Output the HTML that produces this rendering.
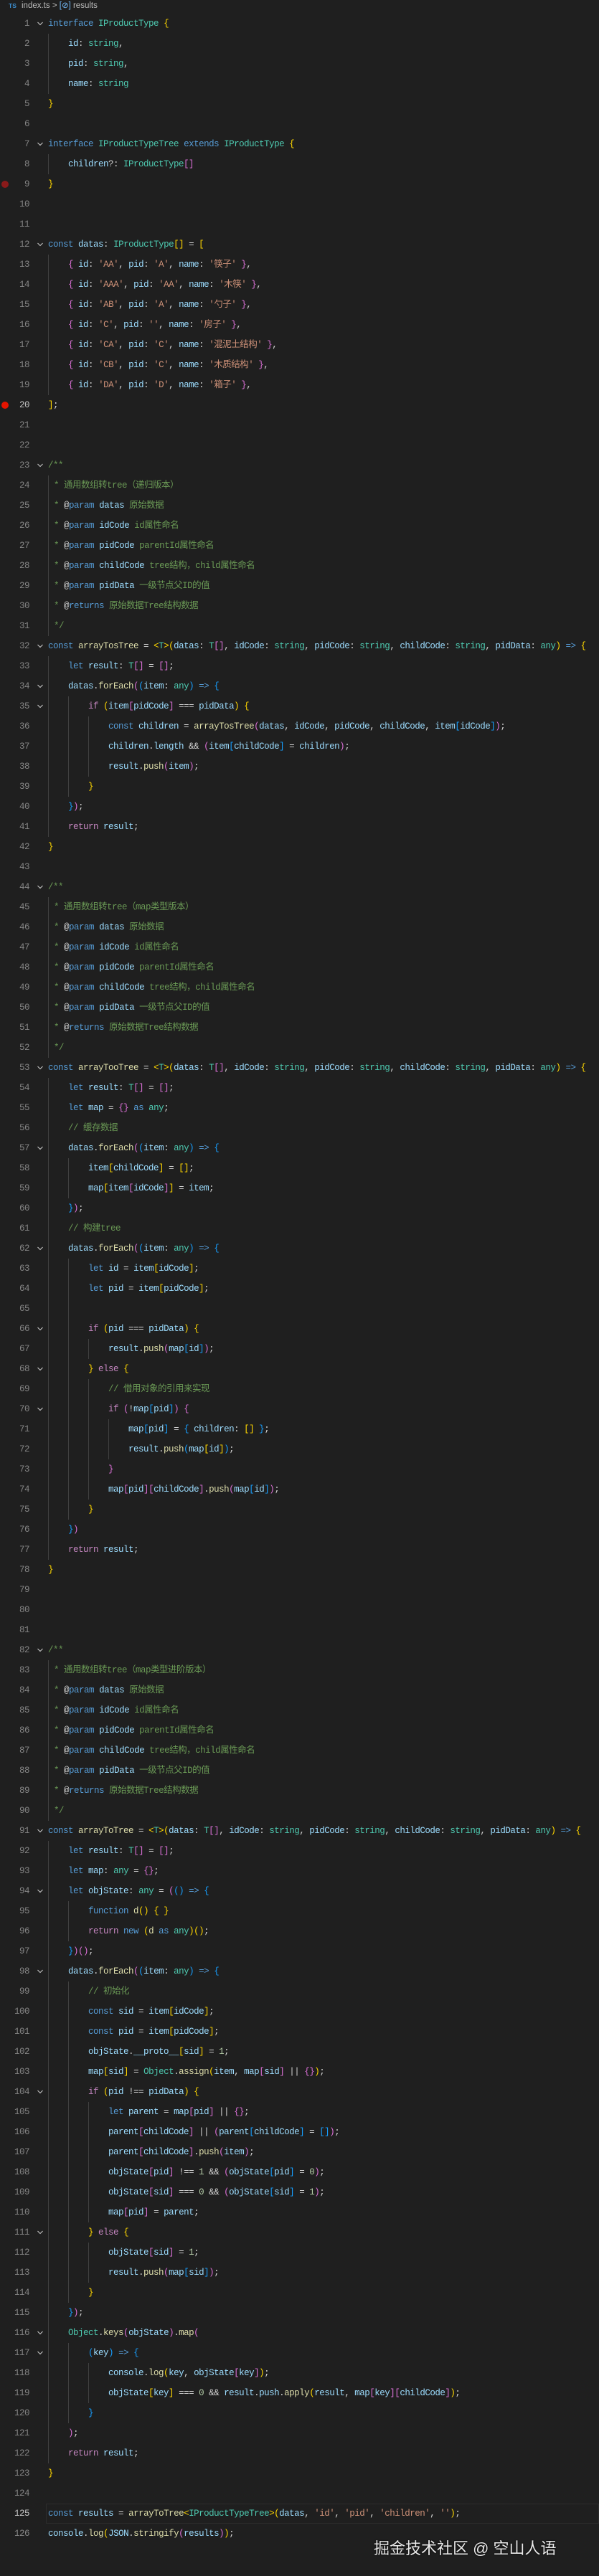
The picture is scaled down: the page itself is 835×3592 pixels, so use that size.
<!DOCTYPE html>
<html><head><meta charset="utf-8"><style>
html,body{margin:0;padding:0;background:#1f1f1f;}
body{width:835px;height:3592px;position:relative;overflow:hidden;font-family:"Liberation Mono","Noto Sans CJK SC",monospace;font-size:12.5px;letter-spacing:-0.5px;color:#d4d4d4;}
.hd{position:absolute;left:0;top:0;height:19px;width:835px;font-family:"Liberation Sans",sans-serif;letter-spacing:0;font-size:11.5px;color:#bbb;line-height:17px;}
.hd .ts{position:absolute;left:12px;top:0;color:#3c8fd0;font-weight:bold;font-size:8.5px;}
.hd .t{position:absolute;left:30px;top:0;}
.ed{position:absolute;left:0;top:19px;width:835px;}
.l{height:28px;position:relative;line-height:28px;}
.l .n{position:absolute;left:0;width:41px;text-align:right;color:#858585;font-size:12.5px;}
.l .c{position:absolute;left:67px;top:0;white-space:pre;}
.l .f{position:absolute;left:52px;top:11px;width:8px;height:6px;}
.g{display:inline-block;height:28px;vertical-align:top;background:repeating-linear-gradient(90deg,#404040 0 1px,transparent 1px 28px);}
.g1{width:28px}.g2{width:56px}.g3{width:84px}.g4{width:112px}
.gc{display:inline-block;height:28px;vertical-align:top;width:8px;border-left:1px solid #404040;box-sizing:border-box;}
kw{color:#569cd6}ct{color:#c586c0}ty{color:#4ec9b0}vr{color:#9cdcfe}fn{color:#dcdcaa}st{color:#ce9178}cm{color:#6a9955}nm{color:#b5cea8}
y1{color:#ffd700}m2{color:#da70d6}b3{color:#179fff}dk{color:#569cd6}ak{color:#d4d4d4}
.bp{position:absolute;left:2px;top:9px;width:10px;height:10px;border-radius:50%;background:#e51400;}
.hl{position:absolute;left:64px;right:0;top:0;height:26px;border:1px solid #2c2c2c;}
.wm{position:absolute;left:521px;top:3536px;font-family:"Liberation Sans","Noto Sans CJK SC",sans-serif;font-size:22px;letter-spacing:0;color:#e8e8e8;text-shadow:0 0 2px #000;}
</style></head><body>
<div class="hd"><span class="ts">TS</span><span class="t">index.ts &gt; <span style="color:#75beff">[⊘]</span> results</span></div>
<svg width="0" height="0" style="position:absolute"><defs><symbol id="ch" viewBox="0 0 8 6"><path d="M0.5 1 L4 4.5 L7.5 1" fill="none" stroke="#c5c5c5" stroke-width="1.1"/></symbol></defs></svg>
<div class="ed">
<div class="l"><span class="n">1</span><svg class="f"><use href="#ch"/></svg><span class="c"><kw>interface</kw> <ty>IProductType</ty> <y1>{</y1></span></div>
<div class="l"><span class="n">2</span><span class="c"><span class="g g1"></span><vr>id</vr>: <ty>string</ty>,</span></div>
<div class="l"><span class="n">3</span><span class="c"><span class="g g1"></span><vr>pid</vr>: <ty>string</ty>,</span></div>
<div class="l"><span class="n">4</span><span class="c"><span class="g g1"></span><vr>name</vr>: <ty>string</ty></span></div>
<div class="l"><span class="n">5</span><span class="c"><y1>}</y1></span></div>
<div class="l"><span class="n">6</span></div>
<div class="l"><span class="n">7</span><svg class="f"><use href="#ch"/></svg><span class="c"><kw>interface</kw> <ty>IProductTypeTree</ty> <kw>extends</kw> <ty>IProductType</ty> <y1>{</y1></span></div>
<div class="l"><span class="n">8</span><span class="c"><span class="g g1"></span><vr>children</vr>?: <ty>IProductType</ty><m2>[]</m2></span></div>
<div class="l"><span class="bp" style="background:#8a1a1a"></span><span class="n">9</span><span class="c"><y1>}</y1></span></div>
<div class="l"><span class="n">10</span></div>
<div class="l"><span class="n">11</span></div>
<div class="l"><span class="n">12</span><svg class="f"><use href="#ch"/></svg><span class="c"><kw>const</kw> <vr>datas</vr>: <ty>IProductType</ty><y1>[]</y1> = <y1>[</y1></span></div>
<div class="l"><span class="n">13</span><span class="c"><span class="g g1"></span><m2>{</m2> <vr>id</vr>: <st>'AA'</st>, <vr>pid</vr>: <st>'A'</st>, <vr>name</vr>: <st>'筷子'</st> <m2>}</m2>,</span></div>
<div class="l"><span class="n">14</span><span class="c"><span class="g g1"></span><m2>{</m2> <vr>id</vr>: <st>'AAA'</st>, <vr>pid</vr>: <st>'AA'</st>, <vr>name</vr>: <st>'木筷'</st> <m2>}</m2>,</span></div>
<div class="l"><span class="n">15</span><span class="c"><span class="g g1"></span><m2>{</m2> <vr>id</vr>: <st>'AB'</st>, <vr>pid</vr>: <st>'A'</st>, <vr>name</vr>: <st>'勺子'</st> <m2>}</m2>,</span></div>
<div class="l"><span class="n">16</span><span class="c"><span class="g g1"></span><m2>{</m2> <vr>id</vr>: <st>'C'</st>, <vr>pid</vr>: <st>''</st>, <vr>name</vr>: <st>'房子'</st> <m2>}</m2>,</span></div>
<div class="l"><span class="n">17</span><span class="c"><span class="g g1"></span><m2>{</m2> <vr>id</vr>: <st>'CA'</st>, <vr>pid</vr>: <st>'C'</st>, <vr>name</vr>: <st>'混泥土结构'</st> <m2>}</m2>,</span></div>
<div class="l"><span class="n">18</span><span class="c"><span class="g g1"></span><m2>{</m2> <vr>id</vr>: <st>'CB'</st>, <vr>pid</vr>: <st>'C'</st>, <vr>name</vr>: <st>'木质结构'</st> <m2>}</m2>,</span></div>
<div class="l"><span class="n">19</span><span class="c"><span class="g g1"></span><m2>{</m2> <vr>id</vr>: <st>'DA'</st>, <vr>pid</vr>: <st>'D'</st>, <vr>name</vr>: <st>'箱子'</st> <m2>}</m2>,</span></div>
<div class="l"><span class="bp"></span><span class="n" style="color:#c6c6c6">20</span><span class="c"><y1>]</y1>;</span></div>
<div class="l"><span class="n">21</span></div>
<div class="l"><span class="n">22</span></div>
<div class="l"><span class="n">23</span><svg class="f"><use href="#ch"/></svg><span class="c"><cm>/**</cm></span></div>
<div class="l"><span class="n">24</span><span class="c"><span class="gc"></span><cm>* 通用数组转tree（递归版本）</cm></span></div>
<div class="l"><span class="n">25</span><span class="c"><span class="gc"></span><cm>* </cm><ak>@</ak><dk>param</dk> <vr>datas</vr> <cm>原始数据</cm></span></div>
<div class="l"><span class="n">26</span><span class="c"><span class="gc"></span><cm>* </cm><ak>@</ak><dk>param</dk> <vr>idCode</vr> <cm>id属性命名</cm></span></div>
<div class="l"><span class="n">27</span><span class="c"><span class="gc"></span><cm>* </cm><ak>@</ak><dk>param</dk> <vr>pidCode</vr> <cm>parentId属性命名</cm></span></div>
<div class="l"><span class="n">28</span><span class="c"><span class="gc"></span><cm>* </cm><ak>@</ak><dk>param</dk> <vr>childCode</vr> <cm>tree结构，child属性命名</cm></span></div>
<div class="l"><span class="n">29</span><span class="c"><span class="gc"></span><cm>* </cm><ak>@</ak><dk>param</dk> <vr>pidData</vr> <cm>一级节点父ID的值</cm></span></div>
<div class="l"><span class="n">30</span><span class="c"><span class="gc"></span><cm>* </cm><ak>@</ak><dk>returns</dk> <cm>原始数据Tree结构数据</cm></span></div>
<div class="l"><span class="n">31</span><span class="c"><span class="gc"></span><cm>*/</cm></span></div>
<div class="l"><span class="n">32</span><svg class="f"><use href="#ch"/></svg><span class="c"><kw>const</kw> <fn>arrayTosTree</fn> = <y1>&lt;</y1><ty>T</ty><y1>&gt;</y1><y1>(</y1><vr>datas</vr>: <ty>T</ty><m2>[]</m2>, <vr>idCode</vr>: <ty>string</ty>, <vr>pidCode</vr>: <ty>string</ty>, <vr>childCode</vr>: <ty>string</ty>, <vr>pidData</vr>: <ty>any</ty><y1>)</y1> <kw>=&gt;</kw> <y1>{</y1></span></div>
<div class="l"><span class="n">33</span><span class="c"><span class="g g1"></span><kw>let</kw> <vr>result</vr>: <ty>T</ty><m2>[]</m2> = <m2>[]</m2>;</span></div>
<div class="l"><span class="n">34</span><svg class="f"><use href="#ch"/></svg><span class="c"><span class="g g1"></span><vr>datas</vr>.<fn>forEach</fn><m2>(</m2><b3>(</b3><vr>item</vr>: <ty>any</ty><b3>)</b3> <kw>=&gt;</kw> <b3>{</b3></span></div>
<div class="l"><span class="n">35</span><svg class="f"><use href="#ch"/></svg><span class="c"><span class="g g2"></span><ct>if</ct> <y1>(</y1><vr>item</vr><m2>[</m2><vr>pidCode</vr><m2>]</m2> === <vr>pidData</vr><y1>)</y1> <y1>{</y1></span></div>
<div class="l"><span class="n">36</span><span class="c"><span class="g g3"></span><kw>const</kw> <vr>children</vr> = <fn>arrayTosTree</fn><m2>(</m2><vr>datas</vr>, <vr>idCode</vr>, <vr>pidCode</vr>, <vr>childCode</vr>, <vr>item</vr><b3>[</b3><vr>idCode</vr><b3>]</b3><m2>)</m2>;</span></div>
<div class="l"><span class="n">37</span><span class="c"><span class="g g3"></span><vr>children</vr>.<vr>length</vr> &amp;&amp; <m2>(</m2><vr>item</vr><b3>[</b3><vr>childCode</vr><b3>]</b3> = <vr>children</vr><m2>)</m2>;</span></div>
<div class="l"><span class="n">38</span><span class="c"><span class="g g3"></span><vr>result</vr>.<fn>push</fn><m2>(</m2><vr>item</vr><m2>)</m2>;</span></div>
<div class="l"><span class="n">39</span><span class="c"><span class="g g2"></span><y1>}</y1></span></div>
<div class="l"><span class="n">40</span><span class="c"><span class="g g1"></span><b3>}</b3><m2>)</m2>;</span></div>
<div class="l"><span class="n">41</span><span class="c"><span class="g g1"></span><ct>return</ct> <vr>result</vr>;</span></div>
<div class="l"><span class="n">42</span><span class="c"><y1>}</y1></span></div>
<div class="l"><span class="n">43</span></div>
<div class="l"><span class="n">44</span><svg class="f"><use href="#ch"/></svg><span class="c"><cm>/**</cm></span></div>
<div class="l"><span class="n">45</span><span class="c"><span class="gc"></span><cm>* 通用数组转tree（map类型版本）</cm></span></div>
<div class="l"><span class="n">46</span><span class="c"><span class="gc"></span><cm>* </cm><ak>@</ak><dk>param</dk> <vr>datas</vr> <cm>原始数据</cm></span></div>
<div class="l"><span class="n">47</span><span class="c"><span class="gc"></span><cm>* </cm><ak>@</ak><dk>param</dk> <vr>idCode</vr> <cm>id属性命名</cm></span></div>
<div class="l"><span class="n">48</span><span class="c"><span class="gc"></span><cm>* </cm><ak>@</ak><dk>param</dk> <vr>pidCode</vr> <cm>parentId属性命名</cm></span></div>
<div class="l"><span class="n">49</span><span class="c"><span class="gc"></span><cm>* </cm><ak>@</ak><dk>param</dk> <vr>childCode</vr> <cm>tree结构，child属性命名</cm></span></div>
<div class="l"><span class="n">50</span><span class="c"><span class="gc"></span><cm>* </cm><ak>@</ak><dk>param</dk> <vr>pidData</vr> <cm>一级节点父ID的值</cm></span></div>
<div class="l"><span class="n">51</span><span class="c"><span class="gc"></span><cm>* </cm><ak>@</ak><dk>returns</dk> <cm>原始数据Tree结构数据</cm></span></div>
<div class="l"><span class="n">52</span><span class="c"><span class="gc"></span><cm>*/</cm></span></div>
<div class="l"><span class="n">53</span><svg class="f"><use href="#ch"/></svg><span class="c"><kw>const</kw> <fn>arrayTooTree</fn> = <y1>&lt;</y1><ty>T</ty><y1>&gt;</y1><y1>(</y1><vr>datas</vr>: <ty>T</ty><m2>[]</m2>, <vr>idCode</vr>: <ty>string</ty>, <vr>pidCode</vr>: <ty>string</ty>, <vr>childCode</vr>: <ty>string</ty>, <vr>pidData</vr>: <ty>any</ty><y1>)</y1> <kw>=&gt;</kw> <y1>{</y1></span></div>
<div class="l"><span class="n">54</span><span class="c"><span class="g g1"></span><kw>let</kw> <vr>result</vr>: <ty>T</ty><m2>[]</m2> = <m2>[]</m2>;</span></div>
<div class="l"><span class="n">55</span><span class="c"><span class="g g1"></span><kw>let</kw> <vr>map</vr> = <m2>{}</m2> <kw>as</kw> <ty>any</ty>;</span></div>
<div class="l"><span class="n">56</span><span class="c"><span class="g g1"></span><cm>// 缓存数据</cm></span></div>
<div class="l"><span class="n">57</span><svg class="f"><use href="#ch"/></svg><span class="c"><span class="g g1"></span><vr>datas</vr>.<fn>forEach</fn><m2>(</m2><b3>(</b3><vr>item</vr>: <ty>any</ty><b3>)</b3> <kw>=&gt;</kw> <b3>{</b3></span></div>
<div class="l"><span class="n">58</span><span class="c"><span class="g g2"></span><vr>item</vr><y1>[</y1><vr>childCode</vr><y1>]</y1> = <y1>[]</y1>;</span></div>
<div class="l"><span class="n">59</span><span class="c"><span class="g g2"></span><vr>map</vr><y1>[</y1><vr>item</vr><m2>[</m2><vr>idCode</vr><m2>]</m2><y1>]</y1> = <vr>item</vr>;</span></div>
<div class="l"><span class="n">60</span><span class="c"><span class="g g1"></span><b3>}</b3><m2>)</m2>;</span></div>
<div class="l"><span class="n">61</span><span class="c"><span class="g g1"></span><cm>// 构建tree</cm></span></div>
<div class="l"><span class="n">62</span><svg class="f"><use href="#ch"/></svg><span class="c"><span class="g g1"></span><vr>datas</vr>.<fn>forEach</fn><m2>(</m2><b3>(</b3><vr>item</vr>: <ty>any</ty><b3>)</b3> <kw>=&gt;</kw> <b3>{</b3></span></div>
<div class="l"><span class="n">63</span><span class="c"><span class="g g2"></span><kw>let</kw> <vr>id</vr> = <vr>item</vr><y1>[</y1><vr>idCode</vr><y1>]</y1>;</span></div>
<div class="l"><span class="n">64</span><span class="c"><span class="g g2"></span><kw>let</kw> <vr>pid</vr> = <vr>item</vr><y1>[</y1><vr>pidCode</vr><y1>]</y1>;</span></div>
<div class="l"><span class="n">65</span><span class="c"><span class="g g2"></span></span></div>
<div class="l"><span class="n">66</span><svg class="f"><use href="#ch"/></svg><span class="c"><span class="g g2"></span><ct>if</ct> <y1>(</y1><vr>pid</vr> === <vr>pidData</vr><y1>)</y1> <y1>{</y1></span></div>
<div class="l"><span class="n">67</span><span class="c"><span class="g g3"></span><vr>result</vr>.<fn>push</fn><m2>(</m2><vr>map</vr><b3>[</b3><vr>id</vr><b3>]</b3><m2>)</m2>;</span></div>
<div class="l"><span class="n">68</span><svg class="f"><use href="#ch"/></svg><span class="c"><span class="g g2"></span><y1>}</y1> <ct>else</ct> <y1>{</y1></span></div>
<div class="l"><span class="n">69</span><span class="c"><span class="g g3"></span><cm>// 借用对象的引用来实现</cm></span></div>
<div class="l"><span class="n">70</span><svg class="f"><use href="#ch"/></svg><span class="c"><span class="g g3"></span><ct>if</ct> <m2>(</m2>!<vr>map</vr><b3>[</b3><vr>pid</vr><b3>]</b3><m2>)</m2> <m2>{</m2></span></div>
<div class="l"><span class="n">71</span><span class="c"><span class="g g4"></span><vr>map</vr><b3>[</b3><vr>pid</vr><b3>]</b3> = <b3>{</b3> <vr>children</vr>: <y1>[]</y1> <b3>}</b3>;</span></div>
<div class="l"><span class="n">72</span><span class="c"><span class="g g4"></span><vr>result</vr>.<fn>push</fn><b3>(</b3><vr>map</vr><y1>[</y1><vr>id</vr><y1>]</y1><b3>)</b3>;</span></div>
<div class="l"><span class="n">73</span><span class="c"><span class="g g3"></span><m2>}</m2></span></div>
<div class="l"><span class="n">74</span><span class="c"><span class="g g3"></span><vr>map</vr><m2>[</m2><vr>pid</vr><m2>]</m2><m2>[</m2><vr>childCode</vr><m2>]</m2>.<fn>push</fn><m2>(</m2><vr>map</vr><b3>[</b3><vr>id</vr><b3>]</b3><m2>)</m2>;</span></div>
<div class="l"><span class="n">75</span><span class="c"><span class="g g2"></span><y1>}</y1></span></div>
<div class="l"><span class="n">76</span><span class="c"><span class="g g1"></span><b3>}</b3><m2>)</m2></span></div>
<div class="l"><span class="n">77</span><span class="c"><span class="g g1"></span><ct>return</ct> <vr>result</vr>;</span></div>
<div class="l"><span class="n">78</span><span class="c"><y1>}</y1></span></div>
<div class="l"><span class="n">79</span></div>
<div class="l"><span class="n">80</span></div>
<div class="l"><span class="n">81</span></div>
<div class="l"><span class="n">82</span><svg class="f"><use href="#ch"/></svg><span class="c"><cm>/**</cm></span></div>
<div class="l"><span class="n">83</span><span class="c"><span class="gc"></span><cm>* 通用数组转tree（map类型进阶版本）</cm></span></div>
<div class="l"><span class="n">84</span><span class="c"><span class="gc"></span><cm>* </cm><ak>@</ak><dk>param</dk> <vr>datas</vr> <cm>原始数据</cm></span></div>
<div class="l"><span class="n">85</span><span class="c"><span class="gc"></span><cm>* </cm><ak>@</ak><dk>param</dk> <vr>idCode</vr> <cm>id属性命名</cm></span></div>
<div class="l"><span class="n">86</span><span class="c"><span class="gc"></span><cm>* </cm><ak>@</ak><dk>param</dk> <vr>pidCode</vr> <cm>parentId属性命名</cm></span></div>
<div class="l"><span class="n">87</span><span class="c"><span class="gc"></span><cm>* </cm><ak>@</ak><dk>param</dk> <vr>childCode</vr> <cm>tree结构，child属性命名</cm></span></div>
<div class="l"><span class="n">88</span><span class="c"><span class="gc"></span><cm>* </cm><ak>@</ak><dk>param</dk> <vr>pidData</vr> <cm>一级节点父ID的值</cm></span></div>
<div class="l"><span class="n">89</span><span class="c"><span class="gc"></span><cm>* </cm><ak>@</ak><dk>returns</dk> <cm>原始数据Tree结构数据</cm></span></div>
<div class="l"><span class="n">90</span><span class="c"><span class="gc"></span><cm>*/</cm></span></div>
<div class="l"><span class="n">91</span><svg class="f"><use href="#ch"/></svg><span class="c"><kw>const</kw> <fn>arrayToTree</fn> = <y1>&lt;</y1><ty>T</ty><y1>&gt;</y1><y1>(</y1><vr>datas</vr>: <ty>T</ty><m2>[]</m2>, <vr>idCode</vr>: <ty>string</ty>, <vr>pidCode</vr>: <ty>string</ty>, <vr>childCode</vr>: <ty>string</ty>, <vr>pidData</vr>: <ty>any</ty><y1>)</y1> <kw>=&gt;</kw> <y1>{</y1></span></div>
<div class="l"><span class="n">92</span><span class="c"><span class="g g1"></span><kw>let</kw> <vr>result</vr>: <ty>T</ty><m2>[]</m2> = <m2>[]</m2>;</span></div>
<div class="l"><span class="n">93</span><span class="c"><span class="g g1"></span><kw>let</kw> <vr>map</vr>: <ty>any</ty> = <m2>{}</m2>;</span></div>
<div class="l"><span class="n">94</span><svg class="f"><use href="#ch"/></svg><span class="c"><span class="g g1"></span><kw>let</kw> <vr>objState</vr>: <ty>any</ty> = <m2>(</m2><b3>()</b3> <kw>=&gt;</kw> <b3>{</b3></span></div>
<div class="l"><span class="n">95</span><span class="c"><span class="g g2"></span><kw>function</kw> <fn>d</fn><y1>()</y1> <y1>{</y1> <y1>}</y1></span></div>
<div class="l"><span class="n">96</span><span class="c"><span class="g g2"></span><ct>return</ct> <kw>new</kw> <y1>(</y1><fn>d</fn> <kw>as</kw> <ty>any</ty><y1>)()</y1>;</span></div>
<div class="l"><span class="n">97</span><span class="c"><span class="g g1"></span><b3>}</b3><m2>)()</m2>;</span></div>
<div class="l"><span class="n">98</span><svg class="f"><use href="#ch"/></svg><span class="c"><span class="g g1"></span><vr>datas</vr>.<fn>forEach</fn><m2>(</m2><b3>(</b3><vr>item</vr>: <ty>any</ty><b3>)</b3> <kw>=&gt;</kw> <b3>{</b3></span></div>
<div class="l"><span class="n">99</span><span class="c"><span class="g g2"></span><cm>// 初始化</cm></span></div>
<div class="l"><span class="n">100</span><span class="c"><span class="g g2"></span><kw>const</kw> <vr>sid</vr> = <vr>item</vr><y1>[</y1><vr>idCode</vr><y1>]</y1>;</span></div>
<div class="l"><span class="n">101</span><span class="c"><span class="g g2"></span><kw>const</kw> <vr>pid</vr> = <vr>item</vr><y1>[</y1><vr>pidCode</vr><y1>]</y1>;</span></div>
<div class="l"><span class="n">102</span><span class="c"><span class="g g2"></span><vr>objState</vr>.<vr>__proto__</vr><y1>[</y1><vr>sid</vr><y1>]</y1> = <nm>1</nm>;</span></div>
<div class="l"><span class="n">103</span><span class="c"><span class="g g2"></span><vr>map</vr><y1>[</y1><vr>sid</vr><y1>]</y1> = <ty>Object</ty>.<fn>assign</fn><y1>(</y1><vr>item</vr>, <vr>map</vr><m2>[</m2><vr>sid</vr><m2>]</m2> || <m2>{}</m2><y1>)</y1>;</span></div>
<div class="l"><span class="n">104</span><svg class="f"><use href="#ch"/></svg><span class="c"><span class="g g2"></span><ct>if</ct> <y1>(</y1><vr>pid</vr> !== <vr>pidData</vr><y1>)</y1> <y1>{</y1></span></div>
<div class="l"><span class="n">105</span><span class="c"><span class="g g3"></span><kw>let</kw> <vr>parent</vr> = <vr>map</vr><m2>[</m2><vr>pid</vr><m2>]</m2> || <m2>{}</m2>;</span></div>
<div class="l"><span class="n">106</span><span class="c"><span class="g g3"></span><vr>parent</vr><m2>[</m2><vr>childCode</vr><m2>]</m2> || <m2>(</m2><vr>parent</vr><b3>[</b3><vr>childCode</vr><b3>]</b3> = <b3>[]</b3><m2>)</m2>;</span></div>
<div class="l"><span class="n">107</span><span class="c"><span class="g g3"></span><vr>parent</vr><m2>[</m2><vr>childCode</vr><m2>]</m2>.<fn>push</fn><m2>(</m2><vr>item</vr><m2>)</m2>;</span></div>
<div class="l"><span class="n">108</span><span class="c"><span class="g g3"></span><vr>objState</vr><m2>[</m2><vr>pid</vr><m2>]</m2> !== <nm>1</nm> &amp;&amp; <m2>(</m2><vr>objState</vr><b3>[</b3><vr>pid</vr><b3>]</b3> = <nm>0</nm><m2>)</m2>;</span></div>
<div class="l"><span class="n">109</span><span class="c"><span class="g g3"></span><vr>objState</vr><m2>[</m2><vr>sid</vr><m2>]</m2> === <nm>0</nm> &amp;&amp; <m2>(</m2><vr>objState</vr><b3>[</b3><vr>sid</vr><b3>]</b3> = <nm>1</nm><m2>)</m2>;</span></div>
<div class="l"><span class="n">110</span><span class="c"><span class="g g3"></span><vr>map</vr><m2>[</m2><vr>pid</vr><m2>]</m2> = <vr>parent</vr>;</span></div>
<div class="l"><span class="n">111</span><svg class="f"><use href="#ch"/></svg><span class="c"><span class="g g2"></span><y1>}</y1> <ct>else</ct> <y1>{</y1></span></div>
<div class="l"><span class="n">112</span><span class="c"><span class="g g3"></span><vr>objState</vr><m2>[</m2><vr>sid</vr><m2>]</m2> = <nm>1</nm>;</span></div>
<div class="l"><span class="n">113</span><span class="c"><span class="g g3"></span><vr>result</vr>.<fn>push</fn><m2>(</m2><vr>map</vr><b3>[</b3><vr>sid</vr><b3>]</b3><m2>)</m2>;</span></div>
<div class="l"><span class="n">114</span><span class="c"><span class="g g2"></span><y1>}</y1></span></div>
<div class="l"><span class="n">115</span><span class="c"><span class="g g1"></span><b3>}</b3><m2>)</m2>;</span></div>
<div class="l"><span class="n">116</span><svg class="f"><use href="#ch"/></svg><span class="c"><span class="g g1"></span><ty>Object</ty>.<fn>keys</fn><m2>(</m2><vr>objState</vr><m2>)</m2>.<fn>map</fn><m2>(</m2></span></div>
<div class="l"><span class="n">117</span><svg class="f"><use href="#ch"/></svg><span class="c"><span class="g g2"></span><b3>(</b3><vr>key</vr><b3>)</b3> <kw>=&gt;</kw> <b3>{</b3></span></div>
<div class="l"><span class="n">118</span><span class="c"><span class="g g3"></span><vr>console</vr>.<fn>log</fn><y1>(</y1><vr>key</vr>, <vr>objState</vr><m2>[</m2><vr>key</vr><m2>]</m2><y1>)</y1>;</span></div>
<div class="l"><span class="n">119</span><span class="c"><span class="g g3"></span><vr>objState</vr><y1>[</y1><vr>key</vr><y1>]</y1> === <nm>0</nm> &amp;&amp; <vr>result</vr>.<vr>push</vr>.<fn>apply</fn><y1>(</y1><vr>result</vr>, <vr>map</vr><m2>[</m2><vr>key</vr><m2>]</m2><m2>[</m2><vr>childCode</vr><m2>]</m2><y1>)</y1>;</span></div>
<div class="l"><span class="n">120</span><span class="c"><span class="g g2"></span><b3>}</b3></span></div>
<div class="l"><span class="n">121</span><span class="c"><span class="g g1"></span><m2>)</m2>;</span></div>
<div class="l"><span class="n">122</span><span class="c"><span class="g g1"></span><ct>return</ct> <vr>result</vr>;</span></div>
<div class="l"><span class="n">123</span><span class="c"><y1>}</y1></span></div>
<div class="l"><span class="n">124</span></div>
<div class="l"><span class="hl"></span><span class="n" style="color:#c6c6c6">125</span><span class="c"><kw>const</kw> <vr>results</vr> = <fn>arrayToTree</fn><y1>&lt;</y1><ty>IProductTypeTree</ty><y1>&gt;</y1><y1>(</y1><vr>datas</vr>, <st>'id'</st>, <st>'pid'</st>, <st>'children'</st>, <st>''</st><y1>)</y1>;</span></div>
<div class="l"><span class="n">126</span><span class="c"><vr>console</vr>.<fn>log</fn><y1>(</y1><vr>JSON</vr>.<fn>stringify</fn><m2>(</m2><vr>results</vr><m2>)</m2><y1>)</y1>;</span></div>
</div>
<div class="wm">掘金技术社区 @ 空山人语</div>
</body></html>
